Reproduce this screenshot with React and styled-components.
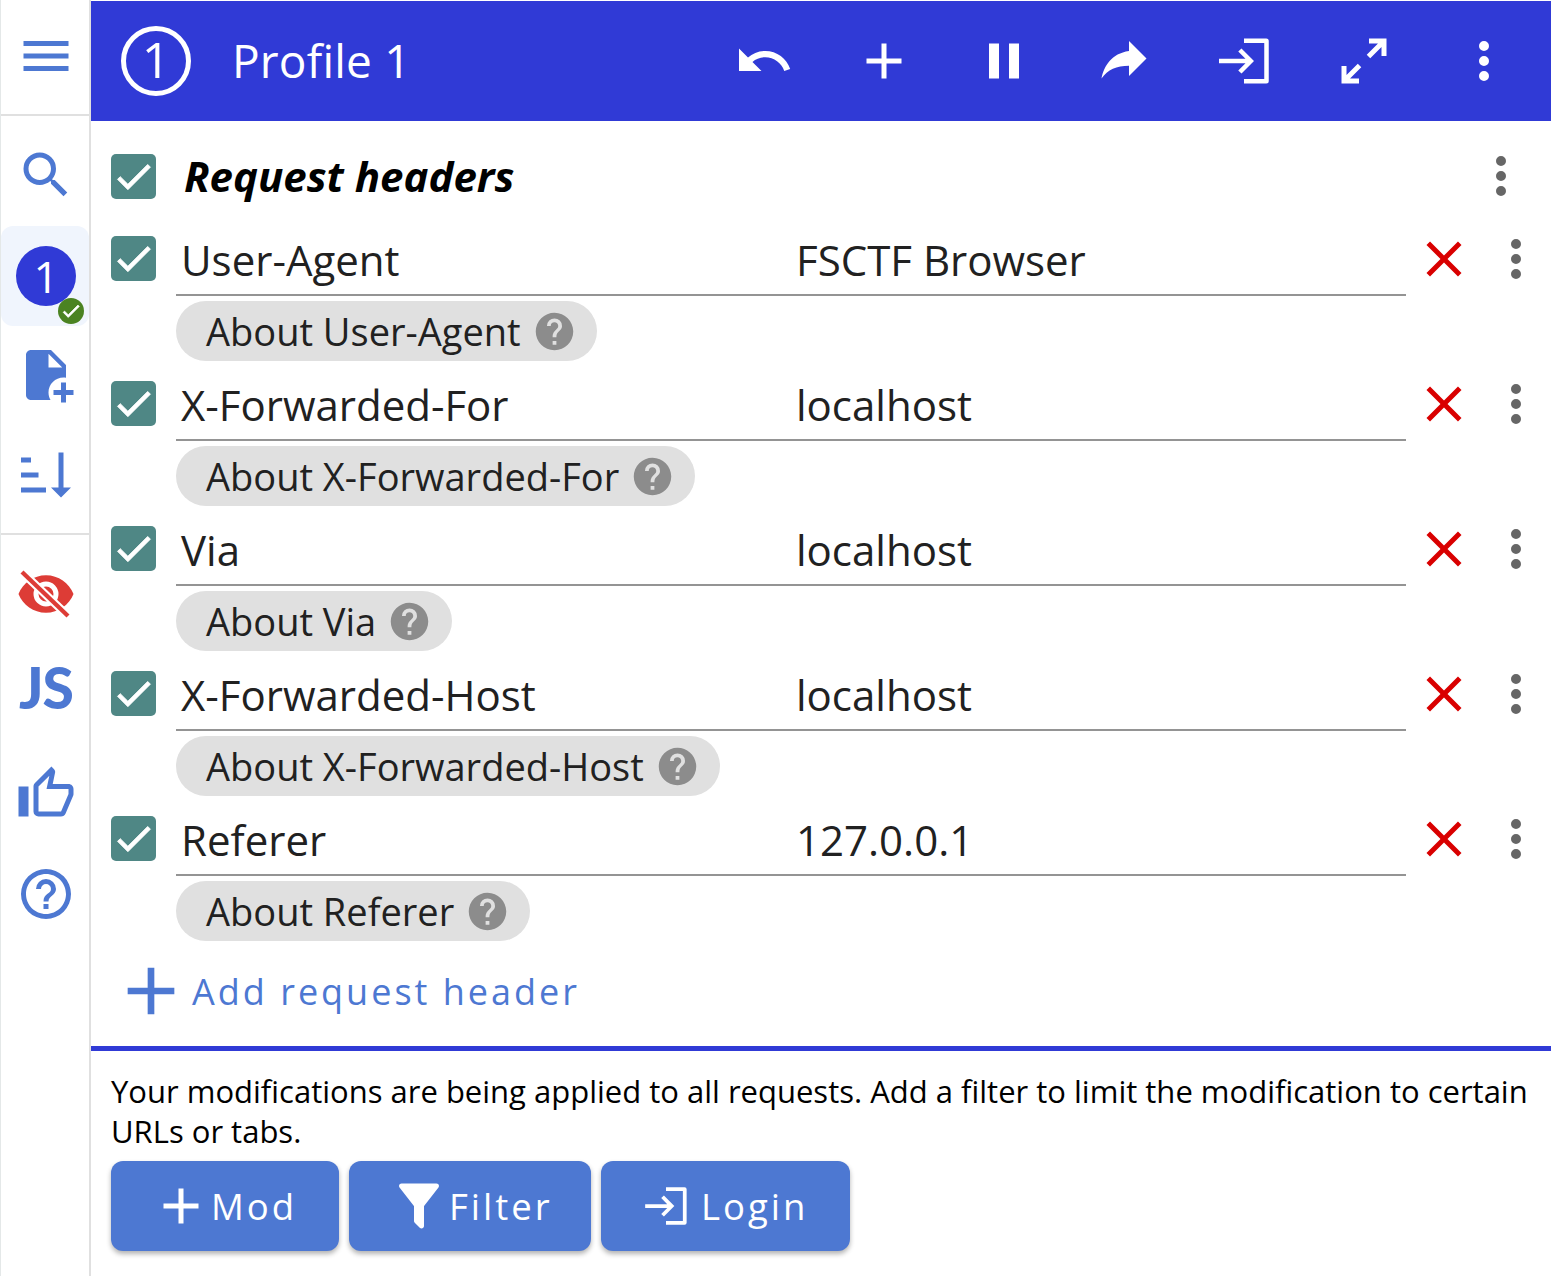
import React from "react";
import styled, { createGlobalStyle } from "styled-components";

const BLUE = "#4d78d2";
const INDIGO = "#303ad6";

const paths = {
  menu: "M3,6H21V8H3V6M3,11H21V13H3V11M3,16H21V18H3V16Z",
  search:
    "M9.5,3A6.5,6.5 0 0,1 16,9.5C16,11.11 15.41,12.59 14.44,13.73L14.71,14H15.5L20.5,19L19,20.5L14,15.5V14.71L13.73,14.44C12.59,15.41 11.11,16 9.5,16A6.5,6.5 0 0,1 3,9.5A6.5,6.5 0 0,1 9.5,3M9.5,5C7,5 5,7 5,9.5C5,12 7,14 9.5,14C12,14 14,12 14,9.5C14,7 12,5 9.5,5Z",
  filePlus:
    "M14 2H6C4.9 2 4 2.9 4 4V20C4 21.1 4.9 22 6 22H13.81C13.27 21.1 13 20.05 13 19C13 15.69 15.69 13 19 13C19.34 13 19.67 13 20 13.08V8L14 2M13 9V3.5L18.5 9H13M20 15V18H23V20H20V23H18V20H15V18H18V15H20Z",
  sort: "M19 17H22L18 21L14 17H17V3H19M2 17H12V19H2M6 5V7H2V5M2 11H9V13H2V11Z",
  eye: "M12,9A3,3 0 0,0 9,12A3,3 0 0,0 12,15A3,3 0 0,0 15,12A3,3 0 0,0 12,9M12,17A5,5 0 0,1 7,12A5,5 0 0,1 12,7A5,5 0 0,1 17,12A5,5 0 0,1 12,17M12,4.5C7,4.5 2.73,7.61 1,12C2.73,16.39 7,19.5 12,19.5C17,19.5 21.27,16.39 23,12C21.27,7.61 17,4.5 12,4.5Z",
  thumb:
    "M5,9V21H1V9H5M9,21A2,2 0 0,1 7,19V9C7,8.45 7.22,7.95 7.59,7.59L14.17,1L15.23,2.06C15.5,2.33 15.67,2.7 15.67,3.11L15.64,3.43L14.69,8H21C22.11,8 23,8.9 23,10V12C23,12.26 22.95,12.5 22.86,12.73L19.84,19.78C19.54,20.5 18.83,21 18,21H9M9,19H18.03L21,12V10H12.21L13.34,4.68L9,9.03V19Z",
  helpOutline:
    "M11,18H13V16H11V18M12,2A10,10 0 0,0 2,12A10,10 0 0,0 12,22A10,10 0 0,0 22,12A10,10 0 0,0 12,2M12,20C7.59,20 4,16.41 4,12C4,7.59 7.59,4 12,4C16.41,4 20,7.59 20,12C20,16.41 16.41,20 12,20M12,6A4,4 0 0,0 8,10H10A2,2 0 0,1 12,8A2,2 0 0,1 14,10C14,12 11,11.75 11,15H13C13,12.75 16,12.5 16,10A4,4 0 0,0 12,6Z",
  help: "M15.07,11.25L14.17,12.17C13.45,12.89 13,13.5 13,15H11V14.5C11,13.39 11.45,12.39 12.17,11.67L13.41,10.41C13.78,10.05 14,9.55 14,9C14,7.89 13.1,7 12,7A2,2 0 0,0 10,9H8A4,4 0 0,1 12,5A4,4 0 0,1 16,9C16,9.88 15.64,10.67 15.07,11.25M13,19H11V17H13M12,2A10,10 0 0,0 2,12C2,17.53 6.47,22 12,22C17.53,22 22,17.53 22,12C22,6.47 17.5,2 12,2Z",
  undo: "M12.5,8C9.85,8 7.45,9 5.6,10.6L2,7V16H11L7.38,12.38C8.77,11.22 10.54,10.5 12.5,10.5C16.04,10.5 19.05,12.81 20.1,16L22.47,15.22C21.08,11.03 17.15,8 12.5,8Z",
  plus: "M19,13H13V19H11V13H5V11H11V5H13V11H19V13Z",
  pause: "M14,19H18V5H14M6,19H10V5H6V19Z",
  share: "M21,11L14,4V8C7,9 4,14 3,19C5.5,15.5 9,13.9 14,13.9V18L21,11Z",
  login:
    "M12,3H20.9A1,1 0 0,1 21.9,4V20A1,1 0 0,1 20.9,21H12V19.2H20.1V4.8H12V3M2,11.1H12.6L9.7,8.2L11,7L16,12L11,17L9.7,15.8L12.6,12.9H2V11.1Z",
  expand:
    "M10,21V19H6.41L10.91,14.5L9.5,13.09L5,17.59V14H3V21H10M14.5,10.91L19,6.41V10H21V3H14V5H17.59L13.09,9.5L14.5,10.91Z",
  dots: "M12,16A2,2 0 0,1 14,18A2,2 0 0,1 12,20A2,2 0 0,1 10,18A2,2 0 0,1 12,16M12,10A2,2 0 0,1 14,12A2,2 0 0,1 12,14A2,2 0 0,1 10,12A2,2 0 0,1 12,10M12,4A2,2 0 0,1 14,6A2,2 0 0,1 12,8A2,2 0 0,1 10,6A2,2 0 0,1 12,4Z",
  close:
    "M19,6.41L17.59,5L12,10.59L6.41,5L5,6.41L10.59,12L5,17.59L6.41,19L12,13.41L17.59,19L19,17.59L13.41,12L19,6.41Z",
  check: "M21,7L9,19L3.5,13.5L4.91,12.09L9,16.17L19.59,5.59L21,7Z",
  filter:
    "M14,12V19.88C14.04,20.18 13.94,20.5 13.71,20.71C13.32,21.1 12.69,21.1 12.3,20.71L10.29,18.7C10.06,18.47 9.96,18.16 10,17.87V12H9.97L4.21,4.62C3.87,4.19 3.95,3.56 4.38,3.22C4.57,3.08 4.78,3 5,3V3H19V3C19.22,3 19.43,3.08 19.62,3.22C20.05,3.56 20.13,4.19 19.79,4.62L14.03,12H14Z",
};

const headers = [
  { name: "User-Agent", value: "FSCTF Browser" },
  { name: "X-Forwarded-For", value: "localhost" },
  { name: "Via", value: "localhost" },
  { name: "X-Forwarded-Host", value: "localhost" },
  { name: "Referer", value: "127.0.0.1" },
];

const GlobalStyle = createGlobalStyle`
  * {
    box-sizing: border-box;
  }

  body {
    margin: 0;
    background: #fff;
    color: #212121;
    font-family: "Open Sans", "Noto Sans", sans-serif;
  }
`;

const Svg = styled.svg`
  display: block;
  flex: none;
  width: ${(p) => p.$size || 60}px;
  height: ${(p) => p.$size || 60}px;
  fill: ${(p) => p.$color || "currentColor"};
`;

const Icon = ({ name, size, color, bold }) => (
  <Svg viewBox="0 0 24 24" $size={size} $color={color}>
    <path d={paths[name]} stroke={bold ? "currentColor" : "none"} strokeWidth={bold || 0} />
  </Svg>
);

const Page = styled.div`
  display: flex;
  width: 1551px;
  height: 1276px;
  padding-top: 1px;
  overflow: hidden;
`;

const Sidebar = styled.nav`
  flex: none;
  width: 91px;
  border-left: 1px solid #e4e8e8;
  border-right: 2px solid #e0e0e0;
  margin-top: -1px;
  padding-top: 1px;
  color: ${BLUE};
`;

const SideSection = styled.div`
  display: flex;
  flex-direction: column;
  align-items: center;
  height: ${(p) => p.$height}px;
  padding-top: ${(p) => p.$top || 0}px;
  border-bottom: ${(p) => (p.$divider ? "2px solid #e0e0e0" : "none")};
`;

const MenuButton = styled.div`
  padding-left: 2px;
`;

const SideButton = styled.div`
  position: relative;
  display: flex;
  align-items: center;
  justify-content: center;
  width: 88px;
  height: 100px;
  flex: none;
  padding-left: 2px;
  padding-bottom: ${(p) => (p.$active ? 0 : 2)}px;
  border-radius: 12px;
  background: ${(p) => (p.$active ? "#f0f5fd" : "transparent")};
`;

const ProfileDot = styled.div`
  display: flex;
  align-items: center;
  justify-content: center;
  width: 60px;
  height: 60px;
  border-radius: 50%;
  background: ${INDIGO};
  color: #fff;
  font-size: 44px;
`;

const StatusBadge = styled.div`
  position: absolute;
  left: 57px;
  top: 72px;
  display: flex;
  align-items: center;
  justify-content: center;
  width: 26px;
  height: 26px;
  border-radius: 50%;
  background: #4b8322;
  color: #fff;
`;

const JsMark = styled.span`
  font-family: "Lato", "Open Sans", sans-serif;
  font-size: 57px;
  font-weight: 900;
  letter-spacing: -1px;
  line-height: 1;
  margin-top: -13px;
`;

const Main = styled.main`
  flex: 1;
  min-width: 0;
  display: flex;
  flex-direction: column;
`;

const Header = styled.header`
  display: flex;
  align-items: center;
  flex: none;
  height: 120px;
  padding: 0 7px 0 30px;
  background: ${INDIGO};
  color: #fff;
`;

const HeaderBadge = styled.div`
  display: flex;
  align-items: center;
  justify-content: center;
  flex: none;
  width: 70px;
  height: 70px;
  padding-bottom: 4px;
  border: 5px solid #fff;
  border-radius: 50%;
  font-size: 50px;
`;

const ProfileName = styled.h1`
  flex: 1;
  margin: 0 0 2px 41px;
  font-size: 46px;
  font-weight: 400;
  letter-spacing: 0.2px;
`;

const HeaderButton = styled.div`
  display: flex;
  justify-content: center;
  width: 120px;
`;

const Content = styled.section`
  flex: 1;
  padding-left: 20px;
`;

const TitleRow = styled.div`
  display: flex;
  align-items: flex-start;
  height: 115px;
  padding-top: 33px;
`;

const Title = styled.h2`
  flex: 1;
  margin: 0 0 0 28px;
  font-size: 42px;
  line-height: 44px;
  font-weight: 700;
  font-style: italic;
  color: #000;
`;

const TitleMenu = styled.div`
  display: flex;
  margin: -8px 20px 0 0;
  color: #666;
`;

const Checkbox = styled.div`
  display: flex;
  flex: none;
  width: 45px;
  height: 45px;
  border-radius: 5px;
  background: #4f8785;
  color: #fff;
`;

const HeaderRow = styled.div`
  display: flex;
  align-items: flex-start;
  height: 145px;
`;

const Fields = styled.div`
  flex: none;
  width: 1230px;
  margin-left: 20px;
`;

const FieldLine = styled.div`
  display: grid;
  grid-template-columns: 620px 1fr;
  height: 60px;
  border-bottom: 2px solid #949494;
  font-size: 42px;
  line-height: 47px;
  span:first-child {
    padding-left: 5px;
  }
`;

const AboutChip = styled.div`
  display: inline-flex;
  align-items: center;
  gap: 11px;
  height: 60px;
  margin-top: 5px;
  padding: 0 20px 0 30px;
  border-radius: 30px;
  background: #e0e0e0;
  font-size: 38px;
  color: #212121;
`;

const RowAction = styled.div`
  display: flex;
  margin-left: ${(p) => p.$gap}px;
  margin-top: -7px;
  color: ${(p) => p.$color};
`;

const AddRow = styled.div`
  display: flex;
  align-items: center;
  height: 60px;
  color: ${BLUE};
  font-size: 36px;
  letter-spacing: 3px;
`;

const AddIcon = styled.div`
  display: flex;
  margin-right: 1px;
`;

const Footer = styled.footer`
  flex: none;
  height: 230px;
  padding: 20px 20px 0;
  border-top: 5px solid ${INDIGO};
  font-size: 31px;
  line-height: 40px;
  color: #000;
`;

const FooterButtons = styled.div`
  display: flex;
  gap: 10px;
  margin-top: 10px;
`;

const ActionButton = styled.div`
  display: flex;
  align-items: center;
  flex: none;
  width: ${(p) => p.$width}px;
  height: 90px;
  padding-left: 40px;
  border-radius: 12px;
  background: ${BLUE};
  box-shadow: 0 3px 5px rgba(0, 0, 0, 0.3);
  color: #fff;
  font-size: 36.5px;
  letter-spacing: 3px;
`;

const ButtonLabel = styled.span`
  margin-left: ${(p) => p.$gap || 0}px;
`;

const sideMiddle = ["filePlus", "sort"];

export default function App() {
  return (
    <>
      <GlobalStyle />
      <Page>
        <Sidebar>
          <SideSection $height={115} $top={25} $divider>
            <MenuButton>
              <Icon name="menu" />
            </MenuButton>
          </SideSection>
          <SideSection $height={419} $top={10} $divider>
            <SideButton>
              <Icon name="search" />
            </SideButton>
            <SideButton $active>
              <ProfileDot>1</ProfileDot>
              <StatusBadge>
                <Icon name="check" size={22} bold={0.8} />
              </StatusBadge>
            </SideButton>
            {sideMiddle.map((n) => (
              <SideButton key={n}>
                <Icon name={n} />
              </SideButton>
            ))}
          </SideSection>
          <SideSection $height={420} $top={10}>
            <SideButton>
              <Svg viewBox="0 0 24 24" $color="#dd3c36">
                <path d={paths.eye} />
                <path d="M2.4 3.2L20.8 20.8" stroke="#fff" strokeWidth="3.4" />
                <path d="M2.4 3.2L20.8 20.8" stroke="#dd3c36" strokeWidth="1.7" />
              </Svg>
            </SideButton>
            <SideButton>
              <JsMark>JS</JsMark>
            </SideButton>
            <SideButton>
              <Icon name="thumb" />
            </SideButton>
            <SideButton>
              <Icon name="helpOutline" />
            </SideButton>
          </SideSection>
        </Sidebar>
        <Main>
          <Header>
            <HeaderBadge>1</HeaderBadge>
            <ProfileName>Profile 1</ProfileName>
            {["undo", "plus", "pause", "share", "login", "expand", "dots"].map((n) => (
              <HeaderButton key={n}>
                <Icon name={n} />
              </HeaderButton>
            ))}
          </Header>
          <Content>
            <TitleRow>
              <Checkbox>
                <Icon name="check" size={45} bold={0.5} />
              </Checkbox>
              <Title>Request headers</Title>
              <TitleMenu>
                <Icon name="dots" />
              </TitleMenu>
            </TitleRow>
            {headers.map((h) => (
              <HeaderRow key={h.name}>
                <Checkbox>
                  <Icon name="check" size={45} bold={0.5} />
                </Checkbox>
                <Fields>
                  <FieldLine>
                    <span>{h.name}</span>
                    <span>{h.value}</span>
                  </FieldLine>
                  <AboutChip>
                    About {h.name}
                    <Icon name="help" size={45} color="#8c8c8c" />
                  </AboutChip>
                </Fields>
                <RowAction $gap={8} $color="#d90000">
                  <Icon name="close" />
                </RowAction>
                <RowAction $gap={12} $color="#666">
                  <Icon name="dots" />
                </RowAction>
              </HeaderRow>
            ))}
            <AddRow>
              <AddIcon>
                <Icon name="plus" size={80} />
              </AddIcon>
              Add request header
            </AddRow>
          </Content>
          <Footer>
            Your modifications are being applied to all requests. Add a filter to limit the
            modification to certain URLs or tabs.
            <FooterButtons>
              <ActionButton $width={228}>
                <Icon name="plus" />
                <ButtonLabel>Mod</ButtonLabel>
              </ActionButton>
              <ActionButton $width={242}>
                <Icon name="filter" />
                <ButtonLabel>Filter</ButtonLabel>
              </ActionButton>
              <ActionButton $width={249}>
                <Icon name="login" size={50} />
                <ButtonLabel $gap={10}>Login</ButtonLabel>
              </ActionButton>
            </FooterButtons>
          </Footer>
        </Main>
      </Page>
    </>
  );
}
